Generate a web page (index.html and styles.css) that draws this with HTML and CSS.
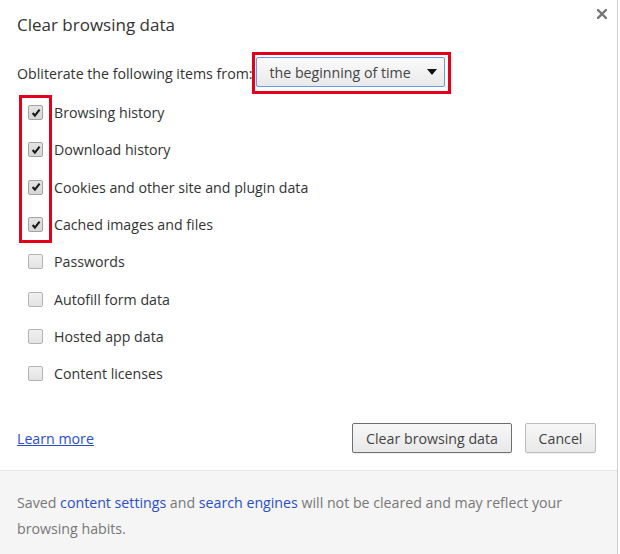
FILE: index.html
```html
<!DOCTYPE html>
<html>
<head>
<meta charset="utf-8">
<link rel="stylesheet" href="styles.css">
</head>
<body>
<div class="dialog">
  <div class="main">
    <header class="head">
      <h1 class="title">Clear browsing data</h1>
      <button class="close" aria-label="Close">
        <svg width="10" height="10" viewBox="0 0 10 10"><path d="M1 1L9 9M9 1L1 9" stroke="#777" stroke-width="2.4" stroke-linecap="square"/></svg>
      </button>
    </header>
    <div class="range">
      <span class="range-label">Obliterate the following items from:</span>
      <span class="hl hl-select">
        <span class="select">
          <span class="select-text">the beginning of time</span>
          <svg class="arrow" width="10" height="6" viewBox="0 0 10 6"><path d="M0 0H10L5 6Z" fill="#111"/></svg>
        </span>
      </span>
    </div>
    <div class="checks">
      <span class="hl hl-checks"></span>

      <span class="cb on r1"><svg viewBox="0 0 13 13"><path d="M2.8 6.6L5.3 9.3L10.4 2.9" fill="none" stroke="#1a1a1a" stroke-width="2.3"/></svg></span>
      <span class="lbl r1">Browsing history</span>

      <span class="cb on r2"><svg viewBox="0 0 13 13"><path d="M2.8 6.6L5.3 9.3L10.4 2.9" fill="none" stroke="#1a1a1a" stroke-width="2.3"/></svg></span>
      <span class="lbl r2">Download history</span>

      <span class="cb on r3"><svg viewBox="0 0 13 13"><path d="M2.8 6.6L5.3 9.3L10.4 2.9" fill="none" stroke="#1a1a1a" stroke-width="2.3"/></svg></span>
      <span class="lbl r3">Cookies and other site and plugin data</span>

      <span class="cb on r4"><svg viewBox="0 0 13 13"><path d="M2.8 6.6L5.3 9.3L10.4 2.9" fill="none" stroke="#1a1a1a" stroke-width="2.3"/></svg></span>
      <span class="lbl r4">Cached images and files</span>

      <span class="cb r5"></span>
      <span class="lbl r5">Passwords</span>

      <span class="cb r6"></span>
      <span class="lbl r6">Autofill form data</span>

      <span class="cb r7"></span>
      <span class="lbl r7">Hosted app data</span>

      <span class="cb r8"></span>
      <span class="lbl r8">Content licenses</span>
    </div>
    <div class="actions">
      <a class="link learn" href="#">Learn more</a>
      <div class="buttons">
        <button class="btn btn-default">Clear browsing data</button>
        <button class="btn">Cancel</button>
      </div>
    </div>
  </div>
  <footer class="foot">
    <p class="foot-text">Saved <a class="flink" href="#">content settings</a> and <a class="flink" href="#">search engines</a> will not be cleared and may reflect your<br>browsing habits.</p>
  </footer>
</div>
</body>
</html>
```

FILE: styles.css
```css
* { box-sizing: border-box; }
html, body { margin: 0; padding: 0; background: #fff; }
body {
  font-family: "Open Sans", "Noto Sans", "DejaVu Sans", sans-serif;
  font-size: 14.2px;
  color: #333;
}
.dialog {
  width: 618px;
  height: 554px;
  border-right: 1px solid #cfcfcf;
  display: flex;
  flex-direction: column;
  background: #fff;
}
.main { padding: 0 21px 0 0; }
.head {
  height: 52px;
  display: flex;
  justify-content: space-between;
  align-items: flex-start;
  padding-left: 17px;
  margin-right: -11px;
}
.title {
  margin: 13px 0 0;
  font-size: 17px;
  font-weight: normal;
  line-height: 24px;
  color: #333;
}
.close {
  margin-top: 9px;
  padding: 0;
  border: 0;
  background: none;
  width: 10px;
  height: 10px;
  display: flex;
}
.range {
  height: 42px;
  display: flex;
  align-items: center;
  padding-left: 17px;
}
.range-label { white-space: nowrap; }
.hl { border: 3px solid #e4001b; }
.hl-select {
  display: flex;
  flex: none;
  height: 42px;
  padding: 2px 3px 4px 1px;
  margin-left: -1px;
}
.select {
  width: 189px;
  height: 30px;
  border: 1px solid #5d9bf5;
  border-radius: 2px;
  background: linear-gradient(#fbfbfb, #e9e9e9);
  display: flex;
  align-items: center;
  justify-content: space-between;
  padding: 0 7px 0 13px;
  color: #444;
}
.arrow { display: block; }
.checks {
  display: grid;
  grid-template-columns: 33px 1fr;
  grid-auto-rows: 37.3px;
  column-gap: 2px;
  padding-left: 19px;
  align-items: center;
}
.hl-checks {
  grid-column: 1;
  grid-row: 1 / 5;
  align-self: stretch;
  margin: 1px 0 0;
}
.cb {
  grid-column: 1;
  justify-self: center;
  width: 15px;
  height: 15px;
  border: 1px solid #b3b3b3;
  border-radius: 2px;
  background: linear-gradient(#f0f0f0, #e3e3e3);
  display: flex;
  align-items: center;
  justify-content: center;
}
.cb.on { border-color: #a3a3a3; background: linear-gradient(#e4e4e4, #d6d6d6); }
.cb svg { width: 12px; height: 12px; }
.lbl { grid-column: 2; }
.r1 { grid-row: 1; } .r2 { grid-row: 2; } .r3 { grid-row: 3; } .r4 { grid-row: 4; }
.r5 { grid-row: 5; } .r6 { grid-row: 6; } .r7 { grid-row: 7; } .r8 { grid-row: 8; }
.actions {
  margin-top: 31px;
  height: 30px;
  display: flex;
  align-items: center;
  justify-content: space-between;
  padding-left: 17px;
}
.link { color: #2a4fc9; text-decoration: underline; }
.buttons { display: flex; gap: 13px; }
.btn {
  font: inherit;
  color: #444;
  height: 30px;
  padding: 0 13px;
  border: 1px solid #bdbdbd;
  border-radius: 2px;
  background: linear-gradient(#f7f7f7, #e9e9e9);
  box-shadow: 0 1px 0 rgba(0,0,0,.06);
}
.btn-default { width: 160px; border-color: #6f6f6f; padding: 0; }
.btn:not(.btn-default) { width: 71px; padding: 0; }
.foot {
  margin-top: 17px;
  flex: 1;
  border-top: 1px solid #e6e6e6;
  background: #f5f5f5;
  padding: 19px 17px 0;
}
.foot-text {
  margin: 0;
  line-height: 26px;
  color: #777;
}
.flink { color: #2a4fc9; text-decoration: none; }
```
